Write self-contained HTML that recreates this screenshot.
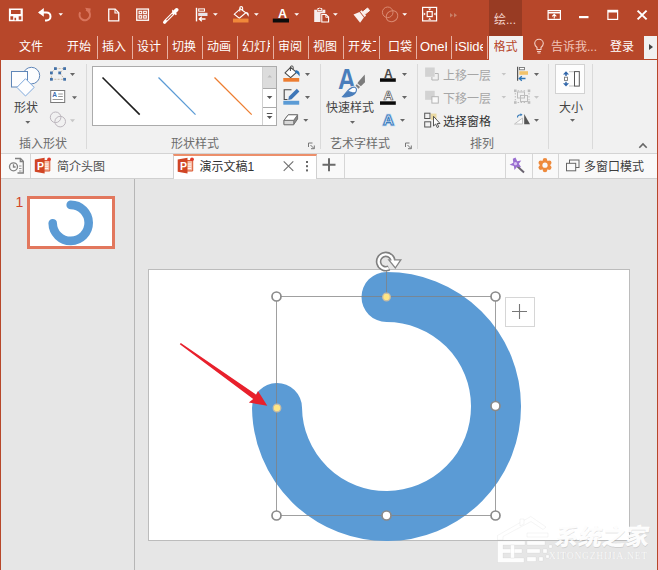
<!DOCTYPE html>
<html lang="zh-CN"><head><meta charset="utf-8"><title>PowerPoint</title>
<style>
*{margin:0;padding:0;box-sizing:border-box}
html,body{width:658px;height:570px;overflow:hidden;background:#e6e6e6}
body{position:relative;font-family:"Liberation Sans","Noto Sans CJK SC",sans-serif;font-size:12px;color:#444;line-height:1}
.abs,.t,.s,.i{position:absolute}
.t{white-space:nowrap;line-height:14px;height:14px}
#title{position:absolute;left:0;top:0;width:658px;height:60px;background:#b7472a}
#ctx{position:absolute;left:489px;top:0;width:33px;height:36px;background:#983b23}
.tab{position:absolute;top:40px;color:#fff;font-size:12px;line-height:14px;white-space:nowrap;overflow:hidden;height:14px}
.sep{position:absolute;top:36px;width:1px;height:23px;background:#e7b0a2}
#ribbon{position:absolute;left:0;top:60px;width:658px;height:93px;background:#f1f1f1}
.gs{position:absolute;top:4px;width:1px;height:85px;background:#dadada}
.gl{position:absolute;top:77px;color:#6c6c6c;font-size:12px;line-height:14px;white-space:nowrap}
.lbl{position:absolute;color:#444;font-size:12px;line-height:14px;white-space:nowrap}
.dd{position:absolute;width:0;height:0;border-left:3px solid transparent;border-right:3px solid transparent;border-top:3px solid #666}
.dd.dim{border-top-color:#c4c4c4}
#docbar{position:absolute;left:0;top:153px;width:658px;height:26px;background:#f9f9f9;border-top:1px solid #d4d4d4;border-bottom:1px solid #d0d0d0}
.ds{position:absolute;top:0;width:1px;height:24px;background:#d6d6d6}
#left{position:absolute;left:0;top:179px;width:135px;height:391px;background:#e6e6e6;border-right:1px solid #b6b6b6}
#slide{position:absolute;left:148px;top:269px;width:482px;height:272px;background:#fff;border:1px solid #bcbcbc;overflow:hidden}
svg{position:absolute;overflow:visible}
</style></head><body>

<div id="title">
  <div id="ctx"><div class="t" style="left:5px;top:12.500px;color:#f3d5cd;font-size:12px">绘...</div></div>
  <!-- tabs -->
  <div class="tab" style="left:19px">文件</div>
  <div class="tab" style="left:67px">开始</div><div class="sep" style="left:97px"></div>
  <div class="tab" style="left:102px">插入</div><div class="sep" style="left:132px"></div>
  <div class="tab" style="left:137px">设计</div><div class="sep" style="left:167px"></div>
  <div class="tab" style="left:172px">切换</div><div class="sep" style="left:202px"></div>
  <div class="tab" style="left:207px">动画</div><div class="sep" style="left:237px"></div>
  <div class="tab" style="left:242px;width:28px">幻灯片</div><div class="sep" style="left:273px"></div>
  <div class="tab" style="left:278px">审阅</div><div class="sep" style="left:308px"></div>
  <div class="tab" style="left:313px">视图</div><div class="sep" style="left:343px"></div>
  <div class="tab" style="left:348px;width:28px">开发工具</div><div class="sep" style="left:379px"></div>
  <div class="tab" style="left:388px">口袋</div><div class="sep" style="left:416px"></div>
  <div class="tab" style="left:420px;width:27px;font-size:13px">OneKey</div><div class="sep" style="left:451px"></div>
  <div class="tab" style="left:455px;width:28px;font-size:13px">iSlide</div><div class="sep" style="left:487px"></div>
  <div class="abs" style="left:489px;top:36px;width:33.500px;height:24px;background:#f1f1f1"></div>
  <div class="tab" style="left:493.500px;color:#b7472a">格式</div>
  <div class="tab" style="left:551px;color:#f0c4b8">告诉我...</div>
  <div class="tab" style="left:610px">登录</div>
  <div class="abs" style="left:644px;top:36px;width:13px;height:23px;background:#f1f1f1"></div>
  <div class="abs" style="left:649px;top:44px;width:0;height:0;border-top:3px solid transparent;border-bottom:3px solid transparent;border-left:4px solid #444"></div>

<svg id="qat" style="left:0;top:0" width="658" height="60" viewBox="0 0 658 60">
  <g fill="none" stroke="#fff" stroke-width="1.500">
    <!-- save -->
    <!-- undo -->
    <path d="M39.500 12.400 H46.500 A4 4 0 0 1 46.500 20.400 H45" stroke-width="2"/>
    <!-- new doc -->
    <path d="M108.750 9.150 H115.200 L118.750 12.700 V20.850 H108.750 Z" stroke-width="1.300"/>
    <path d="M115 9.300 V13 H118.600" stroke-width="1.100"/>
    <!-- grid -->
    <rect x="136.750" y="9.050" width="11.700" height="11.200" stroke-width="1.300"/>
    <g stroke-width="1.100"><rect x="139.100" y="11.300" width="2.600" height="2.400"/><rect x="143.700" y="11.300" width="2.600" height="2.400"/><rect x="139.100" y="15.700" width="2.600" height="2.400"/><rect x="143.700" y="15.700" width="2.600" height="2.400"/></g>
    <!-- eyedropper -->
    <path d="M173.300 13.300 L166.300 20.300 L164.600 22.300" stroke-width="3.200" stroke-linecap="round"/><path d="M172.500 14.100 L166.500 20.100" stroke="#b7472a" stroke-width="1.100"/>
  </g>
  <g fill="#fff">
    <path d="M8.900 8.400 H22.800 V21.300 H8.900 Z M11 9.900 V14 H20.600 V9.900 Z M10.400 16.300 V19.800 H13.200 V16.300 Z M18.700 16.300 V19.800 H21.300 V16.300 Z M14.500 17.800 V20.300 H16.100 V17.800 Z" fill="#fff" fill-rule="evenodd"/>
    <path d="M38 12.400 L43.800 8 V16.800 Z"/>
    <path d="M58.500 13.300 H63 L60.750 15.800 Z"/>
    <!-- eyedropper head -->
    <path d="M172 11.200 L175.800 15 L177 13.800 L176 12.800 L178.300 10.500 A1.900 1.900 0 0 0 175.700 7.900 L173.300 10.200 L172.300 9.200 Z" transform="translate(0,0.300)"/>
    <!-- dropdowns -->
    <path d="M213 13.300 H217.800 L215.400 15.800 Z"/>
    <path d="M254 13.300 H258.800 L256.400 15.800 Z"/>
    <path d="M294.300 13.300 H299.100 L296.700 15.800 Z"/>
    <path d="M333 13.300 H337.800 L335.400 15.800 Z"/>
    <path d="M402.300 13.300 H407.100 L404.700 15.800 Z"/>
  </g>
  <!-- redo dim -->
  <g fill="none" stroke="#d8745c" stroke-width="2">
    <path d="M80.200 12.300 A5.300 5.300 0 1 0 86 9.800"/>
  </g>
  <path d="M84.500 8 H90.300 V13.800 Z" fill="#d8745c" transform="rotate(8 87 11)"/>
  <!-- align -->
  <g>
    <rect x="195.800" y="7.800" width="1.400" height="13.600" fill="#fff"/>
    <rect x="198.700" y="8.900" width="5.800" height="2.300" fill="none" stroke="#fff" stroke-width="1"/>
    <rect x="198.200" y="12.800" width="9.300" height="3.200" fill="#e9e4ea"/>
    <path d="M205.500 19 H199.500 M201.800 16.800 L199.300 19 L201.800 21.200" fill="none" stroke="#fff" stroke-width="1.300"/>
  </g>
  <!-- bucket -->
  <g fill="none" stroke="#fff" stroke-width="1.100">
    <path d="M240.300 8.800 L234.300 14.200 L239.300 18.200 L245.800 12.700 Z"/>
    <path d="M239.800 11.500 V8 A1.400 1.400 0 0 1 242.600 8 V10"/>
  </g>
  <path d="M246.300 12 C248.500 12.300 249.500 14.500 248.300 16.800 C247.500 15 246.800 13.500 245.300 12.900 Z" fill="#fff"/>
  <rect x="233" y="18.600" width="15.500" height="3.900" fill="#f0883a"/>
  <!-- font color A -->
  <text x="278" y="18" font-family="Liberation Sans, sans-serif" font-weight="bold" font-size="12.500" fill="#fff">A</text>
  <rect x="272.800" y="18.600" width="16.200" height="3.900" fill="#0c0c0c"/>
  <!-- paste -->
  <g>
    <path d="M314.200 9.700 H317 V11.600 H322.500 V9.700 H325.300 V13.200 H320.500 V22 H314.200 Z" fill="#f6eeee"/>
    <path d="M317.800 9.600 V8.500 H319 A0.900 0.900 0 0 1 320.600 8.500 H321.800 V10.600 H317.800 Z" fill="none" stroke="#fff" stroke-width="1"/>
    <path d="M321.800 14.500 H326 L328.600 17.100 V22 H321.800 Z" fill="#b7472a" stroke="#fff" stroke-width="1.100"/>
    <path d="M325.800 14.700 V17.300 H328.400" fill="none" stroke="#fff" stroke-width="0.900"/>
  </g>
  <!-- brush -->
  <g fill="#fbf0ee"><path d="M369.6 10.6 L364.9 14.3 L362.9 11.8 L367.6 8.0 Z" stroke="#fbf0ee" stroke-width="1" stroke-linejoin="round"/><path d="M366.1 15.8 L364.5 17.1 L360.1 11.4 L361.7 10.2 Z"/><path d="M363.9 17.6 L360.1 22.8 L353.5 14.4 L359.5 11.9 Z"/></g>
  <!-- circles dim -->
  <g fill="none" stroke="#da8a72" stroke-width="1">
    <circle cx="387.700" cy="12.300" r="5.300"/>
    <ellipse cx="392" cy="16.200" rx="6" ry="5.300" transform="rotate(-30 392 16.200)"/>
  </g>
  <!-- fit -->
  <g fill="none" stroke="#fff" stroke-width="1.200">
    <rect x="422.600" y="7.400" width="14" height="13.500"/>
    <rect x="427.200" y="11.600" width="5" height="5"/>
  </g>
  <g fill="#fff">
    <path d="M428.200 8.500 H431.200 L429.700 10.500 Z"/><path d="M428.200 19.800 H431.200 L429.700 17.800 Z"/>
    <path d="M423.700 12.600 V15.600 L425.700 14.100 Z"/><path d="M435.600 12.600 V15.600 L433.600 14.100 Z"/>
  </g>
  <!-- >> dim -->
  <g fill="#c98068"><path d="M450 13 L453 15.300 L450 17.600 Z"/><path d="M454 13 L457 15.300 L454 17.600 Z"/></g>
  <!-- window controls -->
  <g fill="none" stroke="#fff" stroke-width="1.200">
    <rect x="548.100" y="10.600" width="12.300" height="8.800"/>
    <path d="M548.100 12.700 H560.400" stroke-width="1.600"/>
    <path d="M554.250 18.500 V14.500 M552.200 16.300 L554.250 14.300 L556.300 16.300" stroke-width="1.100"/>
    <rect x="607.900" y="10.400" width="9.700" height="9"/>
    <path d="M607.900 11.400 H617.600" stroke-width="2.200"/>
  </g>
  <rect x="579" y="16" width="9.500" height="2.200" fill="#fff"/>
  <path d="M637.600 10.600 L646.600 19.400 M646.600 10.600 L637.600 19.400" stroke="#fff" stroke-width="2" fill="none"/>
  <!-- lightbulb -->
  <g fill="none" stroke="#f2cfc5" stroke-width="1.100">
    <path d="M537 49.500 V47.500 C535.500 46.200 534.700 45 534.700 43.600 A4.300 4.300 0 0 1 543.300 43.600 C543.300 45 542.500 46.200 541 47.500 V49.500 Z"/>
    <path d="M537 51.500 H541 M537.600 53 H540.400"/>
  </g>
</svg>
</div>

<div id="ribbon">
  <div class="gs" style="left:86px"></div>
  <div class="gs" style="left:320px"></div>
  <div class="gs" style="left:417px"></div>
  <div class="gs" style="left:548px"></div>
  <div class="gs" style="left:592px"></div>
  <div class="lbl" style="left:14px;top:41px">形状</div>
  <div class="gl" style="left:19px">插入形状</div>
  <div class="gl" style="left:171px">形状样式</div>
  <div class="gl" style="left:330px">艺术字样式</div>
  <div class="gl" style="left:470px">排列</div>
  <div class="lbl" style="left:326px;top:41px">快速样式</div>
  <div class="lbl" style="left:443px;top:8.700px;color:#a6a6a6">上移一层</div>
  <div class="lbl" style="left:443px;top:31.700px;color:#a6a6a6">下移一层</div>
  <div class="lbl" style="left:443px;top:54.700px;color:#333">选择窗格</div>
  <div class="lbl" style="left:559px;top:40.500px">大小</div>
  <!-- gallery -->
  <div class="abs" style="left:92px;top:6px;width:185px;height:60px;background:#fff;border:1px solid #ababab"></div>
  <div class="abs" style="left:262px;top:7px;width:14px;height:21px;background:#dcdcdc"></div>
  <div class="abs" style="left:262px;top:28px;width:14px;height:1px;background:#ababab"></div>
  <div class="abs" style="left:262px;top:47px;width:14px;height:1px;background:#ababab"></div>
  <div class="abs" style="left:262px;top:7px;width:1px;height:58px;background:#d0d0d0"></div>

<svg id="rib" style="left:0;top:0" width="658" height="93" viewBox="0 60 658 93">
  <!-- shapes big icon -->
  <circle cx="31.400" cy="75.600" r="8.300" fill="#fdfdfe" stroke="#5f86b8" stroke-width="1"/>
  <rect x="11.500" y="71.500" width="16" height="15.500" fill="#fdfdfe" stroke="#5f86b8" stroke-width="1"/>
  <path d="M25.500 78.700 L34.200 87.400 L25.500 96 L16.900 87.400 Z" fill="#fdfdfe" stroke="#7fa9dc" stroke-width="1"/>
  <path d="M25.3 120.9 h5 l-2.50 2.9 Z" fill="#666"/>
  <!-- edit shape -->
  <g fill="none" stroke="#c9b9a6" stroke-width="1" stroke-dasharray="2 1.200">
    <path d="M55.400 68.600 H64.600 L59.700 72.900 L64.600 79.300 H51.400 V72.900 Z"/>
  </g>
  <g fill="#4472a8">
    <rect x="54" y="67.200" width="2.800" height="2.800"/><rect x="63.200" y="67.200" width="2.800" height="2.800"/>
    <rect x="50" y="71.500" width="2.800" height="2.800"/><rect x="58.300" y="71.500" width="2.800" height="2.800"/>
    <rect x="50" y="77.900" width="2.800" height="2.800"/><rect x="63.200" y="77.900" width="2.800" height="2.800"/>
  </g>
  <path d="M70.0 73.0 h5 l-2.50 2.9 Z" fill="#666"/>
  <!-- text box -->
  <rect x="50.700" y="90.500" width="14" height="12" fill="#fff" stroke="#7a7a7a" stroke-width="1"/>
  <text x="52.300" y="97.300" font-family="Liberation Sans, sans-serif" font-weight="bold" font-size="6.500" fill="#3f6fb0">A</text>
  <path d="M58.200 94 H62.800 M58.200 96.500 H62.800 M52.600 99.500 H62.800" stroke="#8a8a8a" stroke-width="0.900" fill="none"/>
  <path d="M72.0 96.3 h5 l-2.50 2.9 Z" fill="#666"/>
  <!-- merge shapes dim -->
  <g fill="none" stroke="#bcb6bd" stroke-width="1"><circle cx="55.600" cy="117.300" r="5.300"/><circle cx="60.200" cy="121.600" r="5.300"/></g>
  <path d="M70.0 119.3 h5 l-2.50 2.9 Z" fill="#c6c6c6"/>
  <!-- gallery lines -->
  <path d="M102.500 77.500 L139.700 114.600" stroke="#1e1e1e" stroke-width="1.600"/>
  <path d="M158.500 77.500 L195.500 114.600" stroke="#5b9bd5" stroke-width="1.300"/>
  <path d="M214.500 77.500 L251.700 114.600" stroke="#ed7d31" stroke-width="1.300"/>
  <!-- gallery scroll arrows -->
  <path d="M267.400 77.600 h4.600 l-2.300 -2.500 Z" fill="#bdbdbd"/>
  <path d="M266.8 96.0 h5.6 l-2.80 3.1 Z" fill="#555"/>
  <path d="M266.800 113.500 H272.400" stroke="#555" stroke-width="1"/>
  <path d="M266.8 116.0 h5.6 l-2.80 3.1 Z" fill="#555"/>
  <!-- shape fill -->
  <path d="M290.600 67.300 L285 72.800 L290.600 77.600 L296.500 72.300 Z" fill="#fff" stroke="#4a4a4a" stroke-width="1.100" stroke-linejoin="round"/>
  <path d="M290.400 71 V67.300 A1.400 1.400 0 0 1 293.200 67.300 V69.500" fill="none" stroke="#4a4a4a" stroke-width="1"/>
  <path d="M295.500 70.300 C298.800 70.300 300.500 73 299.400 76.600 C298.300 74.500 297.300 73.300 295 72.600 Z" fill="#2e75b6"/>
  <rect x="283.300" y="78" width="15.900" height="3.700" fill="#ed7d31"/>
  <path d="M305.0 73.0 h5 l-2.50 2.9 Z" fill="#666"/>
  <!-- shape outline -->
  <path d="M291.500 89.700 H284.200 V99.500 H287.500" fill="none" stroke="#4a4a4a" stroke-width="1.100"/>
  <path d="M296.800 88.800 L299.400 91.400 L291.600 99.200 L288.200 100 L289 96.600 Z" fill="#3f77b8"/>
  <rect x="283.300" y="100.800" width="15.900" height="3.900" fill="#5b9bd5"/>
  <path d="M305.0 96.0 h5 l-2.50 2.9 Z" fill="#666"/>
  <!-- shape effects -->
  <path d="M284 120.300 L288.300 114.800 H297.600 V119 L293.700 124.700 H284 Z" fill="#8a8a8a" stroke="#6a6a6a" stroke-width="0.900" stroke-linejoin="round"/>
  <path d="M284 120.300 H293.700 V124.700 H284 Z" fill="#d8d8d8" stroke="#6a6a6a" stroke-width="0.800" stroke-linejoin="round"/>
  <path d="M284 120.300 L288.300 114.800 H297.600 L293.700 120.300 Z" fill="#fff" stroke="#6a6a6a" stroke-width="0.900" stroke-linejoin="round"/>
  <path d="M303.3 118.9 h5 l-2.50 2.9 Z" fill="#666"/>
  <!-- dialog launchers -->
  <g fill="none" stroke="#777" stroke-width="1">
    <path d="M308.500 147 V143 H312.500"/><path d="M310.500 145 L314 148.500 M314.300 145.500 V148.700 H311"/>
    <path d="M405.500 147 V143 H409.500"/><path d="M407.500 145 L411 148.500 M411.300 145.500 V148.700 H408"/>
  </g>
  <!-- wordart big -->
  <text transform="translate(338,88.700) scale(0.840,1)" x="0" y="0" font-family="Liberation Sans, sans-serif" font-weight="bold" font-size="29" fill="#4a7ebb">A</text>
  <path d="M364.800 74.600 L365 82.300 L358.300 88.800 L355.200 86.200 L359 81 Z" fill="#7c7c7c"/>
  <path d="M356.200 83 L361 87.200" stroke="#f1f1f1" stroke-width="1.100"/>
  <path d="M354.800 87.200 C350 86.500 347 92 342.600 96.600 C349 97.600 356.300 95 356.500 89.600 C356.500 88.400 355.800 87.600 354.800 87.200 Z" fill="none" stroke="#f1f1f1" stroke-width="3"/>
  <path d="M354.800 87.200 C350 86.500 347 92 342.600 96.600 C349 97.600 356.300 95 356.500 89.600 C356.500 88.400 355.800 87.600 354.800 87.200 Z" fill="#fbfdff" stroke="#4a7ebb" stroke-width="1.100"/>
  <path d="M342.600 96.600 C345 94 346.800 92 348.800 90.800 C351 92.200 353.500 92.700 356 92 C353.500 96.300 347 97.500 342.600 96.600 Z" fill="#4a7ebb"/>
  <path d="M350.0 120.9 h5 l-2.50 2.9 Z" fill="#666"/>
  <!-- text fill -->
  <text x="384" y="77.600" font-family="Liberation Sans, sans-serif" font-weight="bold" font-size="12" fill="#4a4a4a">A</text>
  <rect x="380" y="78.300" width="15.800" height="3.500" fill="#0a0a0a"/>
  <path d="M402.0 73.0 h5 l-2.50 2.9 Z" fill="#666"/>
  <text x="383.600" y="100.200" font-family="Liberation Sans, sans-serif" font-weight="bold" font-size="13.500" fill="#fff" stroke="#505050" stroke-width="0.700">A</text>
  <rect x="380" y="101.300" width="15.800" height="3.500" fill="#0a0a0a"/>
  <path d="M402.0 96.0 h5 l-2.50 2.9 Z" fill="#666"/>
  <text x="383" y="124.800" font-family="Liberation Sans, sans-serif" font-weight="bold" font-size="15" fill="#bcd7f2" stroke="#bcd7f2" stroke-width="2.500">A</text>
  <text x="383" y="124.800" font-family="Liberation Sans, sans-serif" font-weight="bold" font-size="15" fill="#fff" stroke="#3f7fbf" stroke-width="1.100">A</text>
  <path d="M400.0 118.9 h5 l-2.50 2.9 Z" fill="#666"/>
  <!-- bring forward / send backward -->
  <rect x="425.100" y="67.500" width="9.600" height="9.300" fill="#d2d2d2"/>
  <path d="M435 73.500 H438.300 V80 H431.900 V77" fill="none" stroke="#b4b4b4" stroke-width="1"/>
  <path d="M501.5 73.0 h4.6 l-2.30 2.6 Z" fill="#c6c6c6"/>
  <rect x="425.100" y="90.800" width="9.600" height="9" fill="#d2d2d2"/>
  <rect x="431.900" y="96.700" width="6.400" height="6.400" fill="#fafafa" stroke="#b4b4b4" stroke-width="1"/>
  <path d="M501.5 96.0 h4.6 l-2.30 2.6 Z" fill="#c6c6c6"/>
  <!-- selection pane -->
  <rect x="424.700" y="113.200" width="5.300" height="5.300" fill="none" stroke="#555" stroke-width="1"/>
  <rect x="430.800" y="113.600" width="5.700" height="6.200" fill="#ead9a2"/>
  <rect x="424.700" y="121.800" width="6" height="5.200" fill="none" stroke="#555" stroke-width="1"/>
  <path d="M433.500 116.300 V126 L435.700 124 L437.200 127.500 L438.700 126.800 L437.200 123.500 H440 Z" fill="#fff" stroke="#444" stroke-width="0.900"/>
  <!-- align -->
  <path d="M517.600 66.800 V80.800" stroke="#555" stroke-width="1.200"/>
  <rect x="519.500" y="67.400" width="5" height="2.400" fill="#fff" stroke="#666" stroke-width="0.800"/>
  <rect x="519.300" y="71.200" width="8.700" height="3.600" fill="#f2c36b"/>
  <path d="M525.500 78.500 H519.500 M521.800 76.300 L519.300 78.500 L521.800 80.700" stroke="#2e75b6" stroke-width="1.300" fill="none"/>
  <path d="M534.0 73.0 h5 l-2.50 2.9 Z" fill="#666"/>
  <!-- group dim -->
  <g fill="#bdbdbd"><rect x="514" y="89.500" width="2.600" height="2.600"/><rect x="527.700" y="89.500" width="2.600" height="2.600"/><rect x="514" y="101.200" width="2.600" height="2.600"/><rect x="527.700" y="101.200" width="2.600" height="2.600"/></g>
  <g fill="none" stroke="#bdbdbd" stroke-width="1"><rect x="517.500" y="92" width="7" height="6"/><rect x="520.500" y="95.500" width="7" height="6"/>
  <path d="M517.600 90.800 H526.700 M517.600 102.500 H526.700 M515.300 93 V100.300 M529 93 V100.300" stroke-dasharray="1.500 1.500"/></g>
  <path d="M534.0 95.9 h5 l-2.50 2.9 Z" fill="#c6c6c6"/>
  <!-- rotate -->
  <path d="M522.500 118 V124 H514.500 Z" fill="#fafafa" stroke="#bdbdbd" stroke-width="0.900"/>
  <path d="M524.200 114 L530 124.300 H524.200 Z" fill="#555"/>
  <path d="M517.500 117.500 C517.500 115.500 519 114.800 521 114.800" stroke="#2e75b6" stroke-width="1.100" fill="none"/>
  <path d="M520.500 113.300 L522.500 114.800 L520.500 116.300 Z" fill="#2e75b6"/>
  <path d="M534.0 118.9 h5 l-2.50 2.9 Z" fill="#666"/>
  <!-- size -->
  <rect x="555.500" y="64.500" width="29" height="29" fill="#fdfdfd" stroke="#d2d2d2" stroke-width="1"/>
  <g fill="#2e64a8"><path d="M563 74.500 L566 71.300 L569 74.500 Z"/><rect x="565.300" y="74" width="1.400" height="2"/>
  <path d="M563 83.300 L566 86.500 L569 83.300 Z"/><rect x="565.300" y="81.800" width="1.400" height="2"/></g>
  <rect x="564.500" y="77.200" width="3" height="3.200" fill="#fff" stroke="#777" stroke-width="0.900"/>
  <path d="M569.500 71.700 H574 M569.500 86 H574" stroke="#777" stroke-width="0.900" stroke-dasharray="1 1"/>
  <rect x="574.500" y="71.600" width="4.800" height="14.500" fill="#fff" stroke="#555" stroke-width="1"/>
  <path d="M570.0 118.9 h5 l-2.50 2.9 Z" fill="#666"/>
  <!-- collapse -->
  <path d="M639.300 147.700 L643 144 L646.700 147.700" fill="none" stroke="#666" stroke-width="1.600"/>
</svg>
</div>

<div id="docbar">
  <div class="ds" style="left:30px"></div>
  <div class="t" style="left:57px;top:5.700px;color:#505050">简介头图</div>
  <div class="abs" style="left:173px;top:0;width:144px;height:25px;background:#fff;border-top:2px solid #ec8f6b;border-left:1px solid #d0d0d0;border-right:1px solid #d0d0d0"></div>
  <div class="t" style="left:199.500px;top:5.700px;color:#333">演示文稿1</div>
  <div class="ds" style="left:344px"></div>
  <div class="ds" style="left:505px"></div>
  <div class="ds" style="left:532px"></div>
  <div class="ds" style="left:558px"></div>
  <div class="t" style="left:584px;top:5.700px;color:#3c3c3c">多窗口模式</div>

<svg id="doc" style="left:0;top:-1px" width="658" height="26" viewBox="0 153 658 26">
  <!-- history -->
  <g fill="none" stroke="#808080" stroke-width="1.300">
    <path d="M15 158.500 H20.500 L23.300 161.300 V173 H17.500"/>
    <path d="M20.300 158.700 V161.500 H23.100"/>
    <circle cx="13.500" cy="166.800" r="4"/>
    <path d="M13.500 164.300 V167 H15.600"/>
    <path d="M19 166 H21.500 M19 168.500 H21.500 M19 171 H21.500" stroke-width="0.800"/>
  </g>
  <g transform="translate(34.8,157.5)">
    <path d="M7.500 3 H15 V13.500 H7.500 Z" fill="#f4b9a3" stroke="#d9572f" stroke-width="1"/>
    <path d="M9.500 6.500 H13.500 M9.500 8.700 H13.500 M9.500 10.900 H13.500" stroke="#fff" stroke-width="1"/>
    <path d="M0 2 L9.800 0.300 V16 L0 14.300 Z" fill="#d04525"/>
    <text x="2.300" y="12.300" font-family="Liberation Sans, sans-serif" font-weight="bold" font-size="10.500" fill="#fff">P</text>
    <circle cx="14.300" cy="1.800" r="1.900" fill="#e03a2a"/>
    </g>
  <g transform="translate(177.7,157.5)">
    <path d="M7.500 3 H15 V13.500 H7.500 Z" fill="#f4b9a3" stroke="#d9572f" stroke-width="1"/>
    <path d="M9.500 6.500 H13.500 M9.500 8.700 H13.500 M9.500 10.900 H13.500" stroke="#fff" stroke-width="1"/>
    <path d="M0 2 L9.800 0.300 V16 L0 14.300 Z" fill="#d04525"/>
    <text x="2.300" y="12.300" font-family="Liberation Sans, sans-serif" font-weight="bold" font-size="10.500" fill="#fff">P</text>
    <circle cx="14.300" cy="1.800" r="1.900" fill="#e03a2a"/>
    </g>
  <path d="M283.700 161.300 L293.300 170.900 M293.300 161.300 L283.700 170.900" stroke="#707070" stroke-width="1.100" fill="none"/>
  <g fill="#666"><rect x="306" y="161" width="2" height="2"/><rect x="306" y="165.200" width="2" height="2"/><rect x="306" y="169.400" width="2" height="2"/></g>
  <path d="M322.500 164.700 H335.500 M329 158.300 V171.200" stroke="#6a6a6a" stroke-width="2" fill="none"/>
  <!-- wand -->
  <path d="M517 166 L524 172.500" stroke="#6a6470" stroke-width="2"/>
  <path d="M515.500 157.500 L517.200 161.200 L521.300 160.500 L518.800 163.800 L521.200 167.300 L517 166.800 L514.500 170 L513.800 166 L509.600 164.800 L513.300 162.800 L512.800 158.800 Z" fill="#9a6fd0"/>
  <circle cx="515.500" cy="163.700" r="1.600" fill="#d9c6f2"/>
  <!-- gear -->
  <g fill="#ee8a3c">
    <circle cx="545" cy="165.200" r="5"/>
    <circle cx="545" cy="160.400" r="2.300"/><circle cx="545" cy="170" r="2.300"/>
    <circle cx="540.800" cy="162.800" r="2.300"/><circle cx="549.200" cy="162.800" r="2.300"/>
    <circle cx="540.800" cy="167.600" r="2.300"/><circle cx="549.200" cy="167.600" r="2.300"/>
  </g>
  <circle cx="545" cy="165.200" r="2.600" fill="#f9f9f9"/>
  <!-- multiwindow -->
  <g fill="#f9f9f9" stroke="#666" stroke-width="1"><rect x="569.500" y="160" width="9.500" height="7.500"/><rect x="566.500" y="163.300" width="9.200" height="7.500"/></g>
</svg>
</div>

<div id="left">
  <div class="t" style="left:15.500px;top:16px;color:#d24726;font-size:14px">1</div>
  <div class="abs" style="left:27px;top:17px;width:88px;height:53px;background:#fff;border:3px solid #e2775d"></div>

<svg style="left:0;top:0" width="134" height="100" viewBox="0 179 134 100">
  <path d="M70.700 204.900 A18 18 0 1 1 52.700 223.200" fill="none" stroke="#5b9bd5" stroke-width="8.600" stroke-linecap="round"/>
</svg>
</div>

<div id="slide"></div>
<svg id="main" style="left:0;top:0" width="658" height="570" viewBox="0 0 658 570">
  <path d="M386.5 297 A109.5 109.5 0 1 1 277.02 408" fill="none" stroke="#5b9bd5" stroke-width="50" stroke-linecap="round"/>
  <rect x="276.500" y="296.500" width="219" height="219" fill="none" stroke="#808080" stroke-opacity="0.750" stroke-width="1"/>
  <line x1="386.500" y1="296.500" x2="386.500" y2="271" stroke="#808080" stroke-opacity="0.750" stroke-width="1"/>
  <g fill="#fff" stroke="#8a8a8a" stroke-width="1.700">
    <circle cx="276.500" cy="296.500" r="4.500"/><circle cx="495.500" cy="296.500" r="4.500"/>
    <circle cx="495.500" cy="406" r="4.500"/><circle cx="495.500" cy="515.500" r="4.500"/>
    <circle cx="386.500" cy="515.500" r="4.500"/><circle cx="276.500" cy="515.500" r="4.500"/>
  </g>
  <g fill="#ffe685" stroke="#c4bba6" stroke-width="1.300">
    <circle cx="386.500" cy="297" r="3.800"/><circle cx="277" cy="408" r="3.800"/>
  </g>
  <polygon points="180.800,342.900 256.200,394.700 258,391 267.300,405.800 248.800,402.600 253.200,398.900 179.800,344.300" fill="#e8202c"/>
  <!-- rotate handle -->
  <g fill="none">
    <path d="M393 261.500 A7.200 7.200 0 1 0 389 268" stroke="#808080" stroke-width="5.600"/>
    <path d="M388.800 259.800 L400.800 259.800 L395.300 268 Z" fill="#fff" stroke="#858585" stroke-width="1.300"/>
    <path d="M393 262.300 A7.200 7.200 0 1 0 388.600 268.200" stroke="#fff" stroke-width="2.400"/>
  </g>
  <!-- plus -->
  <rect x="505.500" y="297.500" width="29" height="29" fill="#fff" stroke="#d6d6d6"/>
  <path d="M512 311.500 H527 M519.500 304 V319" stroke="#777" stroke-width="1.100"/>
</svg>



<div id="wm" class="abs" style="left:0;top:0;width:658px;height:570px;pointer-events:none">
  <svg style="left:0;top:0" width="658" height="570" viewBox="0 0 658 570">
    <g fill="#fff" fill-opacity="0.920" stroke="#a0a0a0" stroke-opacity="0.180" stroke-width="0.600">
      <path d="M530.800 516.500 L546 527 L543 529.500 L531 521.500 L503 536.500 V540 H497.500 V535.500 Z"/>
      <path d="M520 519 H524 V524 L520 526 Z"/>
      <path d="M497.500 541 H525 V545 H503 V549 H522 V553 H503 V558 H524 V562.500 H497.500 Z"/>
      <path d="M510.500 545 H514.500 V558 H510.500 Z"/>
      <path d="M527 533 H548 V537 H527 Z M527 541 H545 V545 H527 Z M527 549 H540 V553 H527 Z M527 557 H536 V561.500 H527 Z"/>
      <path d="M543 549 H547 V553 H543 Z M549 545 H552 V548 H549 Z M539 557 H543 V561 H539 Z M546 555 H549 V558 H546 Z"/>
    </g>
  </svg>
  <div class="t" id="wmt" style="left:553px;top:523px;height:28px;line-height:28px;font-size:23.500px;font-weight:900;transform:skewX(-9deg);transform-origin:0 100%;color:rgba(255,255,255,0.950);font-family:'Liberation Sans','Noto Sans CJK SC',sans-serif;text-shadow:0.500px 0.500px 0.500px rgba(140,140,140,0.250)">系统之家</div>
  <div class="t" id="wmu" style="left:549px;top:550px;height:12px;line-height:12px;font-size:9.500px;color:rgba(255,255,255,0.900);font-family:'Liberation Serif',serif;letter-spacing:0.780px;text-shadow:0.300px 0.300px 0.400px rgba(140,140,140,0.300)">XITONGZHIJIA.NET</div>
</div>
<div class="abs" style="left:0;top:0;width:1px;height:570px;background:#b7472a"></div>
<div class="abs" style="left:657px;top:0;width:1px;height:570px;background:#b7472a"></div>
</body></html>
